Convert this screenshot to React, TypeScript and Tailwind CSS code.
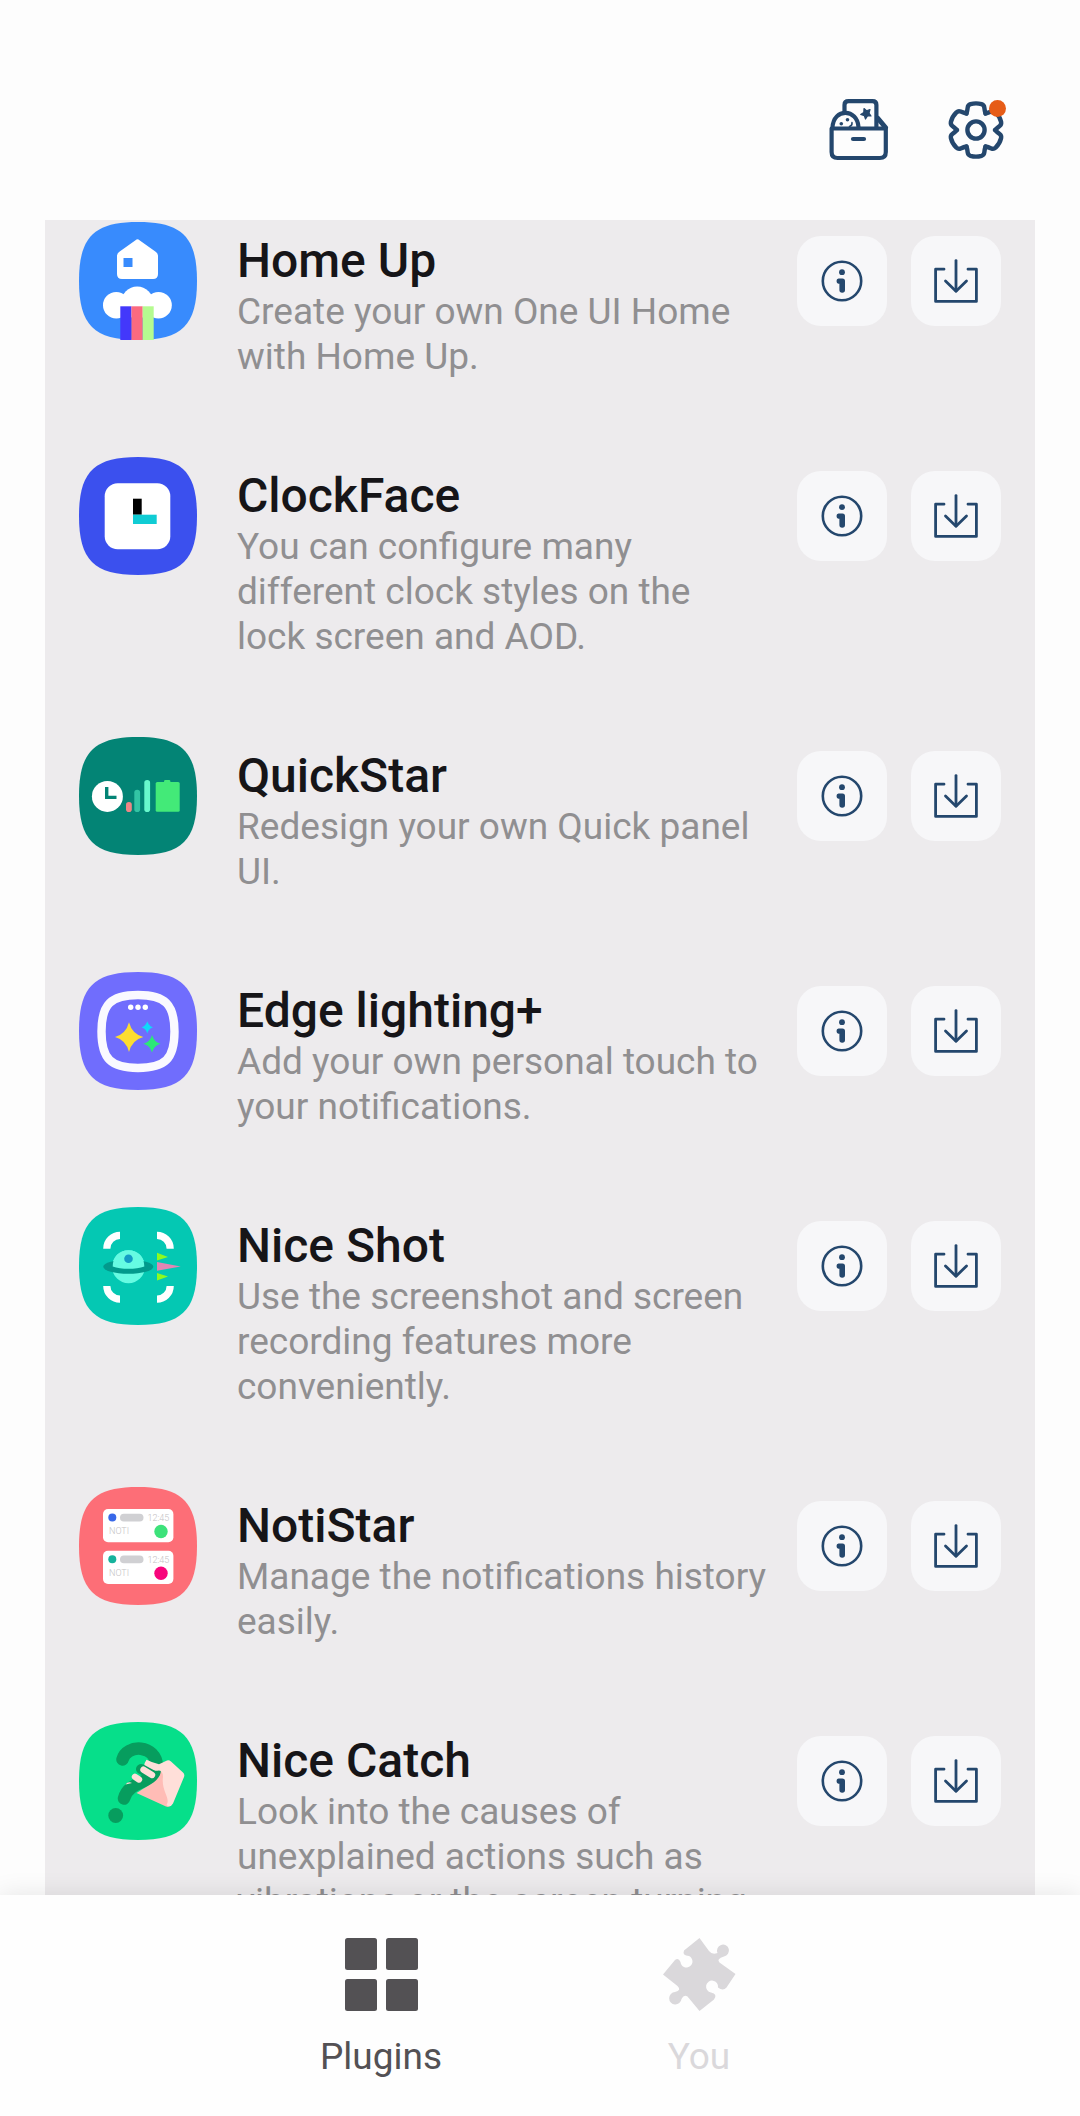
import React, { useState } from 'react';

const SQUIRCLE = 'M0 59C0 15 15 0 59 0S118 15 118 59 103 118 59 118 0 103 0 59Z';

const AppIcon = ({ color, children }: { color: string; children: React.ReactNode }) => (
  <svg viewBox="0 0 118 118" className="w-[118px] h-[118px] shrink-0" aria-hidden="true">
    <path d={SQUIRCLE} fill={color} />
    {children}
  </svg>
);

const HomeUpIcon = () => (
  <AppIcon color="#388bfd">
    <path d="M56.5 18.2Q58.5 16.4 60.5 18.2L77 30Q79 31.5 79 34V52Q79 57 74 57H43Q38 57 38 52V34Q38 31.5 40 30Z" fill="#fff" />
    <rect x="44.5" y="36" width="9" height="9" fill="#388bfd" />
    <circle cx="37.3" cy="83.2" r="13.3" fill="#fff" />
    <circle cx="79.5" cy="83.2" r="13.3" fill="#fff" />
    <circle cx="58.2" cy="80.5" r="16" fill="#fff" />
    <rect x="41.3" y="84.3" width="11.2" height="33.7" fill="#4338fb" />
    <rect x="52.5" y="84.3" width="11.2" height="33.7" fill="#fb6a80" />
    <rect x="63.7" y="84.3" width="11" height="33.7" fill="#b5fb90" />
  </AppIcon>
);

const ClockFaceIcon = () => (
  <AppIcon color="#3b50ee">
    <rect x="25.7" y="26.3" width="65.6" height="66" rx="13" fill="#fff" />
    <rect x="54" y="41.7" width="8.7" height="16" fill="#000" />
    <rect x="54" y="57.7" width="23.7" height="9.3" fill="#10ccd4" />
  </AppIcon>
);

const QuickStarIcon = () => (
  <AppIcon color="#038475">
    <circle cx="28.4" cy="59.4" r="15.5" fill="#fff" />
    <path d="M27.7 50V60.4H37.5" fill="none" stroke="#038475" strokeWidth="3.4" />
    <rect x="47" y="65" width="5.8" height="10" rx="2.8" fill="#ee8686" />
    <rect x="55.3" y="52.7" width="5.8" height="22.3" rx="2.8" fill="#33c4a4" />
    <rect x="65.3" y="43" width="5.8" height="32" rx="2.8" fill="#68f8cc" />
    <rect x="76.7" y="45" width="24" height="29.8" rx="1.6" fill="#43ea78" />
    <rect x="85" y="43" width="6.4" height="4" rx="1.4" fill="#43ea78" />
  </AppIcon>
);

const EdgeLightingIcon = () => (
  <AppIcon color="#706dfd">
    <path d="M22.5 59.5C22.5 32 32 23 59 23S95.5 32 95.5 59.5 86 96 59 96 22.5 87 22.5 59.5Z" fill="none" stroke="#faf9ff" strokeWidth="8.4" />
    <circle cx="51.7" cy="35.3" r="2.7" fill="#fff" />
    <circle cx="59" cy="35.3" r="2.7" fill="#fff" />
    <circle cx="66.3" cy="35.3" r="2.7" fill="#fff" />
    <path d="M50 50.3Q53 62 64.3 65 53 68 50 80 47 68 36 65 47 62 50 50.3Z" fill="#fddc30" />
    <path d="M73 63Q75 70 81.5 71.7 75 73.5 73 80.5 71 73.5 64.5 71.7 71 70 73 63Z" fill="#2ce878" />
    <path d="M68.3 49.3Q69.6 54 74 55.3 69.6 56.6 68.3 61.5 67 56.6 62.5 55.3 67 54 68.3 49.3Z" fill="#10d8fa" />
  </AppIcon>
);

const NiceShotIcon = () => (
  <AppIcon color="#04c8b3">
    <g fill="none" stroke="#fff" strokeWidth="7.2">
      <path d="M27.8 41.7C27.8 34 34 28.4 41 28.4" />
      <path d="M78 28.4C85 28.4 91.2 34 91.2 41.7" />
      <path d="M27.8 79C27.8 86.5 34 92.2 41 92.2" />
      <path d="M91.2 79C91.2 86.5 85 92.2 78 92.2" />
    </g>
    <circle cx="49.5" cy="59.7" r="16.5" fill="#66fbe2" />
    <ellipse cx="49.3" cy="59.8" rx="25" ry="7" fill="#029a8c" />
    <path d="M33.7 59.5C33.7 50 40 43.2 49.5 43.2S65.3 50 65.3 59.5C57 62.6 42 62.6 33.7 59.5Z" fill="#66fbe2" />
    <circle cx="49.5" cy="51.8" r="4.3" fill="#149cc4" />
    <path d="M78 45.7L89 50 78 53.4Z" fill="#8dfa20" />
    <path d="M78 55L101.7 59.6 78 63.8Z" fill="#e286b4" />
    <path d="M78 66L89 69.6 78 73.4Z" fill="#8dfa20" />
  </AppIcon>
);

const NotiCard = ({ y, dot, badge }: { y: number; dot: string; badge: string }) => (
  <g transform={`translate(24 ${y})`}>
    <rect width="70.4" height="33.3" rx="5" fill="#fff" />
    <circle cx="9.3" cy="8.6" r="4" fill={dot} />
    <rect x="17" y="4.8" width="23.5" height="7.7" rx="3.8" fill="#d0d0d3" />
    <text x="44.5" y="12" fontSize="9" fontWeight="300" fill="#c4c2c4">12:45</text>
    <text x="6" y="25.3" fontSize="9" fontWeight="300" fill="#c4c2c4">NOTI</text>
    <circle cx="58" cy="22.5" r="6.7" fill={badge} />
  </g>
);

const NotiStarIcon = () => (
  <AppIcon color="#fd6e77">
    <NotiCard y={22} dot="#3868e8" badge="#3de27a" />
    <NotiCard y={63.7} dot="#16b39c" badge="#f8047c" />
  </AppIcon>
);

const NiceCatchIcon = () => (
  <AppIcon color="#06df8a">
    <path d="M43.5 37.5C47 22 77.5 22 78 44.5C78 62 50 57 45 76.5" fill="none" stroke="#079d5e" strokeWidth="12.5" strokeLinecap="round" />
    <circle cx="36.7" cy="93.5" r="7.4" fill="#079d5e" />
    <path d="M82 48C82 59 68 64 57.5 71L87 84.5Q91 86 92.5 82L100 58 88 42Z" fill="#ffbcb6" />
    <path d="M67.5 37.7Q73 40.5 80 42.2L88 38.5Q90 37.7 92 39.5L104 50.5Q106 52 105 55L94 81.5Q91.5 86 87.5 83C92 76 82 69 84 55Q84 49 80 48.5 72 50 65 44.5Q65 41 67.5 37.7Z" fill="#ffdfd9" />
    <path d="M62 47L73.5 53.2" stroke="#079d5e" strokeWidth="10" strokeLinecap="round" />
    <path d="M64.5 47.7L73 53" stroke="#ffdfd9" strokeWidth="6.4" strokeLinecap="round" />
    <path d="M56 54.8L60 57.5" stroke="#ffdfd9" strokeWidth="6.4" strokeLinecap="round" />
    <path d="M46.5 62.5Q49 59 53 61Z" fill="#ffdfd9" />
  </AppIcon>
);

const DrawerIcon = () => (
  <svg viewBox="0 0 60 63" className="w-[60px] h-[63px]" fill="none" stroke="#24476d" strokeWidth="4.2" strokeLinecap="round" strokeLinejoin="round" aria-hidden="true">
    <path d="M15.5 13V7Q15.5 3.2 19.5 3.2H43.5Q47.4 3.2 47.4 7V29" />
    <path d="M3.5 29.5C4.5 9.5 28.5 10.5 29.5 29" />
    <path d="M49 20.5L56.5 29.5" strokeWidth="5" />
    <path d="M2.6 30.5H56.8V54Q56.8 60 50.8 60H8.6Q2.6 60 2.6 54Z" />
    <path d="M24 41H35" />
    <path d="M35 10.5L37.5 12.7 41 11.5 40 15 42 18 38.5 18 36.5 21 35.3 17.6 31.7 16.5 34.8 14.5Z" fill="#24476d" strokeWidth="1.2" />
    <g fill="#24476d" stroke="none">
      <circle cx="18.5" cy="21.8" r="1.8" />
      <circle cx="12.3" cy="25.8" r="1.8" />
    </g>
    <path d="M23 24.5Q23.5 27.5 20.5 28.5" strokeWidth="1.5" />
  </svg>
);

const GearIcon = () => (
  <svg viewBox="-30 -32 60 63" className="w-[60px] h-[63px]" fill="none" stroke="#24476d" strokeWidth="4.4" strokeLinecap="round" strokeLinejoin="round" aria-hidden="true">
    {[0, 60, 120, 180, 240, 300].map((angle) => (
      <path key={angle} transform={`rotate(${angle})`} d="M-9.5 -16.5Q-8.7 -19 -8.3 -22.5Q-8 -25 -5.5 -25.8Q0 -27.4 5.5 -25.8Q8 -25 8.3 -22.5Q8.7 -19 9.5 -16.5" />
    ))}
    <circle r="8.6" />
  </svg>
);

const InfoIcon = () => (
  <svg viewBox="0 0 42 42" className="w-[42px] h-[42px]" aria-hidden="true">
    <circle cx="21" cy="21" r="19.2" fill="none" stroke="#24476d" strokeWidth="2.6" />
    <circle cx="21" cy="12.2" r="2.9" fill="#24476d" />
    <path d="M17.5 18.5H21.5Q24 18.5 24 21V30Q24 32.7 21.2 32.7T18.4 30V23.8H17.5Q15.5 23.5 15.5 21.1T17.5 18.5Z" fill="#24476d" />
  </svg>
);

const DownloadIcon = () => (
  <svg viewBox="0 0 44 44" className="w-11 h-11" fill="none" stroke="#24476d" strokeWidth="2.8" strokeLinecap="round" strokeLinejoin="round" aria-hidden="true">
    <path d="M10 10.2H1.6V42.4H42.4V10.2H34" />
    <path d="M22 1.6V32" />
    <path d="M11.5 22L22 32.2 32.5 22" />
  </svg>
);

const GridIcon = () => (
  <svg viewBox="0 0 73 73" className="w-[73px] h-[73px]" fill="currentColor" aria-hidden="true">
    <rect width="32" height="32" rx="2.5" />
    <rect x="41" width="32" height="32" rx="2.5" />
    <rect y="41" width="32" height="32" rx="2.5" />
    <rect x="41" y="41" width="32" height="32" rx="2.5" />
  </svg>
);

const PuzzleIcon = () => (
  <svg viewBox="0 0 73 73" className="w-[73px] h-[73px]" fill="currentColor" aria-hidden="true">
    <path d="M36.5 0L46 13Q49 17 54.5 15A6 6 0 1 1 61 18.5Q53 21 56.5 24.5L72.5 36 63.5 49.5Q60 53.5 55 49.5A6 6 0 1 0 48 54.5Q55 56 51 61.5L36.5 73 24.5 58.5Q21 56 18.5 61A6.2 6.2 0 1 1 12 54Q19 52.5 14.5 48L0 36.5 12 22Q15.5 19 17.5 24A6 6 0 1 0 26 18Q19 17.5 21 12.5Z" />
  </svg>
);

const plugins = [
  { name: 'Home Up', icon: HomeUpIcon, description: 'Create your own One UI Home with Home Up.' },
  { name: 'ClockFace', icon: ClockFaceIcon, description: 'You can configure many different clock styles on the lock\u00a0screen and AOD.' },
  { name: 'QuickStar', icon: QuickStarIcon, description: 'Redesign your own Quick panel UI.' },
  { name: 'Edge lighting+', icon: EdgeLightingIcon, description: 'Add your own personal touch to your notifications.' },
  { name: 'Nice Shot', icon: NiceShotIcon, description: 'Use the screenshot and screen recording features more conveniently.' },
  { name: 'NotiStar', icon: NotiStarIcon, description: 'Manage the notifications history easily.' },
  { name: 'Nice Catch', icon: NiceCatchIcon, description: 'Look into the causes of unexplained actions such as vibrations or the screen turning on.' }
];

const tabs = [
  { name: 'Plugins', icon: GridIcon },
  { name: 'You', icon: PuzzleIcon }
];

const App: React.FC = () => {
  const [activeTab, setActiveTab] = useState('Plugins');

  return (
    <div className="flex h-screen flex-col bg-[#fdfdfd] font-['Roboto',sans-serif]">
      {/* Header */}
      <header className="flex shrink-0 items-center justify-end gap-[57px] px-[74px] pt-[98px] pb-[59px]">
        <button type="button" aria-label="Collection">
          <DrawerIcon />
        </button>
        <button type="button" aria-label="Settings" className="relative">
          <GearIcon />
          <span className="absolute top-0.5 right-0 h-[17px] w-[17px] rounded-full bg-[#e65c17]" />
        </button>
      </header>

      {/* Plugin list */}
      <main className="mx-[45px] min-h-0 flex-1 overflow-hidden bg-[#edebed]">
        <ul className="flex flex-col gap-[78px] px-[34px] pt-0.5">
          {plugins.map(({ name, icon: Icon, description }) => (
            <li key={name} className="flex items-start">
              <Icon />
              <div className="ml-10 min-w-0 flex-1 pt-[11px] pr-7">
                <h2 className="text-5xl leading-[56px] font-medium text-[#161518]">{name}</h2>
                <p className="text-[37px] leading-[45px] text-[#908f91]">{description}</p>
              </div>
              <div className="flex shrink-0 gap-6 pt-[14px]">
                <button type="button" aria-label={`About ${name}`} className="flex h-[90px] w-[90px] items-center justify-center rounded-3xl bg-[#f7f7f9]">
                  <InfoIcon />
                </button>
                <button type="button" aria-label={`Download ${name}`} className="flex h-[90px] w-[90px] items-center justify-center rounded-3xl bg-[#f7f7f9]">
                  <DownloadIcon />
                </button>
              </div>
            </li>
          ))}
        </ul>
      </main>

      {/* Bottom tabs */}
      <nav className="relative flex shrink-0 justify-center bg-[#fefefe] pt-[43px] pb-[37px] shadow-[0_0_24px_rgba(0,0,0,0.1)]">
        {tabs.map(({ name, icon: Icon }) => (
          <button
            key={name}
            type="button"
            onClick={() => setActiveTab(name)}
            className={`flex w-[318px] flex-col items-center gap-[23px] ${activeTab === name ? 'text-[#535154]' : 'text-[#dad8db]'}`}
          >
            <Icon />
            <span className="text-[37px] leading-[45px]">{name}</span>
          </button>
        ))}
      </nav>
    </div>
  );
};

export default App;
